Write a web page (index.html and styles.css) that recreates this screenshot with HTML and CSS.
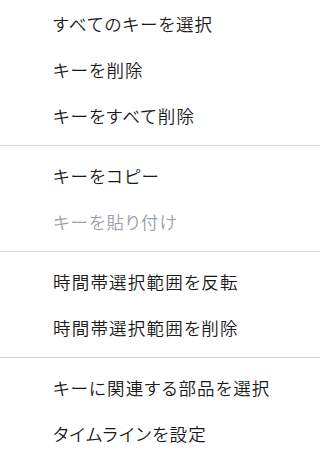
FILE: index.html
```html
<!DOCTYPE html>
<html lang="ja">
<head>
<meta charset="utf-8">
<link rel="stylesheet" href="styles.css">
</head>
<body>
<div class="menu" role="menu">
  <div class="item" role="menuitem">すべてのキーを選択</div>
  <div class="item" role="menuitem">キーを削除</div>
  <div class="item" role="menuitem">キーをすべて削除</div>
  <div class="sep"></div>
  <div class="item" role="menuitem">キーをコピー</div>
  <div class="item disabled" role="menuitem">キーを貼り付け</div>
  <div class="sep"></div>
  <div class="item" role="menuitem">時間帯選択範囲を反転</div>
  <div class="item" role="menuitem">時間帯選択範囲を削除</div>
  <div class="sep"></div>
  <div class="item" role="menuitem">キーに関連する部品を選択</div>
  <div class="item" role="menuitem">タイムラインを設定</div>
</div>
</body>
</html>
```
FILE: styles.css
```css
html, body {
  margin: 0;
  padding: 0;
  background: #ffffff;
}
.menu {
  display: flex;
  flex-direction: column;
  padding-top: 1px;
  font-family: "Noto Sans CJK JP", "Noto Sans", sans-serif;
  font-size: 17.5px;
  font-weight: 350;
  font-feature-settings: "palt" 1;
  letter-spacing: 1.2px;
  color: #1a1a1a;
}
.item {
  height: 46px;
  display: flex;
  align-items: center;
  padding-left: 53px;
  line-height: 1;
  white-space: nowrap;
}
.item.disabled {
  color: #9ba0aa;
}
.sep {
  height: 1px;
  background: #d6d7da;
  margin: 6px 0 7px;
}
```
